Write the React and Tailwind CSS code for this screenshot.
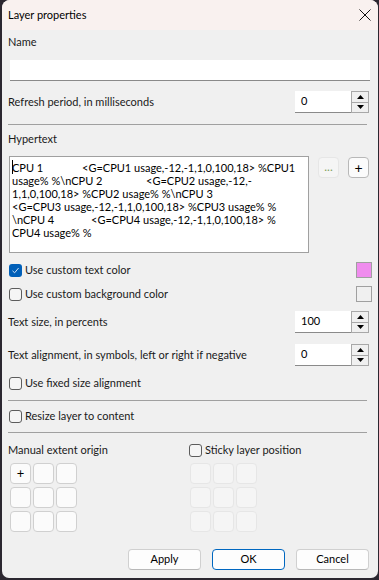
import React from "react";

const F = { fontFamily: 'Lato, "Liberation Sans", sans-serif' };

function Check({ checked, label, className = "" }) {
  return (
    <div className={"flex items-center h-[16px] " + className}>
      {checked ? (
        <div className="w-[13px] h-[13px] rounded-[3px] bg-[#005fb8] flex items-center justify-center">
          <svg width="9" height="9" viewBox="0 0 9 9">
            <path d="M1.5 4.8 L3.6 6.8 L7.6 2" fill="none" stroke="#cfe0f5" strokeWidth="1" />
          </svg>
        </div>
      ) : (
        <div className="w-[13px] h-[13px] rounded-[3px] border border-[#5c5c5c] bg-[#f5f5f5]" />
      )}
      <span className="ml-[3px] text-[11px] text-[#1a1a1a] leading-[16px]">{label}</span>
    </div>
  );
}

function Spin({ value }) {
  return (
    <div className="flex h-[22px]">
      <div className="w-[56px] h-[22px] bg-white border-b border-[#8a8a8a] text-[11px] leading-[14px] pl-[6px] pt-[3px] text-black">
        {value}
      </div>
      <div className="w-[18px] h-[22px] border border-[#a8a8a8] bg-[#f0f0f0] flex flex-col">
        <div className="flex-1 border-b border-[#a8a8a8] flex items-center justify-center">
          <svg width="7" height="4" viewBox="0 0 7 4"><path d="M0 4 L3.5 0 L7 4 Z" fill="#000" /></svg>
        </div>
        <div className="flex-1 flex items-center justify-center">
          <svg width="7" height="4" viewBox="0 0 7 4"><path d="M0 0 L7 0 L3.5 4 Z" fill="#000" /></svg>
        </div>
      </div>
    </div>
  );
}

function Sep({ className = "" }) {
  return <div className={"h-px bg-[#a0a0a0] ml-[6px] mr-[11px] " + className} />;
}

function GridBtn({ children, disabled }) {
  return (
    <div
      className={
        "w-[21px] h-[21px] rounded-[4px] border flex items-center justify-center text-[13px] text-black " +
        (disabled ? "bg-[#f5f5f5] border-[#e6e6e6]" : "bg-[#fbfbfb] border-[#d0d0d0]")
      }
    >
      {children}
    </div>
  );
}

function Grid({ disabled, first }) {
  const cells = [];
  for (let i = 0; i < 9; i++) {
    cells.push(
      <GridBtn key={i} disabled={disabled}>
        {i === 0 && first ? "+" : null}
      </GridBtn>
    );
  }
  return <div className="grid grid-cols-[21px_21px_21px] gap-x-[2px] gap-y-[3px]">{cells}</div>;
}

function Btn({ children, primary }) {
  return (
    <div
      className={
        "w-[73px] h-[21px] rounded-[4px] flex items-center justify-center text-[11px] text-black bg-[#fdfdfd] border " +
        (primary ? "border-[#0067c0]" : "border-[#d0d0d0] border-b-[#b8b8b8]")
      }
    >
      {children}
    </div>
  );
}

export default function App() {
  return (
    <div className="w-[379px] h-[580px] bg-[#2b2730] pl-[2px] pr-[1px] pb-[2px]" style={F}>
      <div className="w-[376px] h-[578px] bg-[#f0f0f0] rounded-t-[8px] rounded-b-[7px] overflow-hidden flex flex-col">
        {/* title bar */}
        <div className="h-[30px] bg-[#f9f1ef] flex items-center justify-between pl-[6px] pr-[7px]">
          <span className="text-[11px] text-black">Layer properties</span>
          <svg width="12" height="12" viewBox="0 0 12 12">
            <path d="M0.5 0.5 L11.5 11.5 M11.5 0.5 L0.5 11.5" stroke="#111" strokeWidth="1" />
          </svg>
        </div>

        <div className="flex flex-col">
          <div className="mt-[4px] ml-[6px] h-[16px] text-[11px] leading-[16px] text-[#1a1a1a]">Name</div>
          <div className="mt-[10px] ml-[8px] mr-[8px] h-[21px] bg-white border-b border-[#8a8a8a]" />
          <div className="mt-[10px] ml-[6px] mr-[9px] h-[22px] flex items-center justify-between">
            <span className="text-[11px] text-[#1a1a1a]">Refresh period, in milliseconds</span>
            <Spin value="0" />
          </div>
          <Sep className="mt-[11px]" />
          <div className="mt-[6px] ml-[6px] h-[16px] text-[11px] leading-[16px] text-[#1a1a1a]">Hypertext</div>
          <div className="mt-[9px] ml-[7px] flex items-start">
            <div className="w-[300px] h-[97px] overflow-hidden bg-white border border-[#a0a0a0] pl-[2px] pt-[4px] text-[11px] leading-[13px] text-black relative">
              <div className="absolute left-[2px] top-[3px] w-px h-[14px] bg-black" />
              <div className="whitespace-pre"><span className="inline-block w-[70px]">CPU 1</span>{"<G=CPU1 usage,-12,-1,1,0,100,18> %CPU1"}</div>
              <div className="whitespace-pre"><span className="inline-block w-[134px]">usage% %\nCPU 2</span>{"<G=CPU2 usage,-12,-"}</div>
              <div className="whitespace-pre">{"1,1,0,100,18> %CPU2 usage% %\\nCPU 3"}</div>
              <div className="whitespace-pre">{"<G=CPU3 usage,-12,-1,1,0,100,18> %CPU3 usage% %"}</div>
              <div className="whitespace-pre"><span className="inline-block w-[79px]">\nCPU 4</span>{"<G=CPU4 usage,-12,-1,1,0,100,18> %"}</div>
              <div className="whitespace-pre">{"CPU4 usage% %"}</div>
            </div>
            <div className="ml-[9px] mt-[1px] w-[21px] h-[21px] rounded-[4px] bg-[#f5f5f5] border border-[#e6e6e6] flex items-center justify-center text-[12px] text-[#7fa05a] leading-none pb-[2px]">
              ...
            </div>
            <div className="ml-[9px] mt-[1px] w-[21px] h-[21px] rounded-[4px] bg-[#fbfbfb] border border-[#b8b8b8] flex items-center justify-center text-[14px] text-black">
              +
            </div>
          </div>

          <div className="mt-[9px] ml-[7px] mr-[6px] h-[16px] flex items-center justify-between">
            <Check checked label="Use custom text color" />
            <div className="w-[16px] h-[16px] border border-[#a0a0a0] bg-[#f08cee]" />
          </div>
          <div className="mt-[8px] ml-[7px] mr-[6px] h-[16px] flex items-center justify-between">
            <Check label="Use custom background color" />
            <div className="w-[16px] h-[16px] border border-[#a0a0a0] bg-[#f0f0f0]" />
          </div>
          <div className="mt-[9px] ml-[6px] mr-[9px] h-[22px] flex items-center justify-between">
            <span className="text-[11px] text-[#1a1a1a]">Text size, in percents</span>
            <Spin value="100" />
          </div>
          <div className="mt-[11px] ml-[6px] mr-[9px] h-[22px] flex items-center justify-between">
            <span className="text-[11px] text-[#1a1a1a]">Text alignment, in symbols, left or right if negative</span>
            <Spin value="0" />
          </div>
          <Check label="Use fixed size alignment" className="mt-[9px] ml-[7px]" />
          <Sep className="mt-[9px]" />
          <Check label="Resize layer to content" className="mt-[7px] ml-[7px]" />
          <Sep className="mt-[8px]" />
          <div className="mt-[9px] ml-[6px] h-[16px] flex items-center">
            <span className="w-[181px] text-[11px] text-[#1a1a1a]">Manual extent origin</span>
            <Check label="Sticky layer position" />
          </div>
          <div className="mt-[5px] ml-[8px] flex">
            <Grid first />
            <div className="ml-[113px]">
              <Grid disabled />
            </div>
          </div>
          <div className="mt-[17px] ml-[126px] flex gap-x-[11px]">
            <Btn>Apply</Btn>
            <Btn primary>OK</Btn>
            <Btn>Cancel</Btn>
          </div>
        </div>
      </div>
    </div>
  );
}
